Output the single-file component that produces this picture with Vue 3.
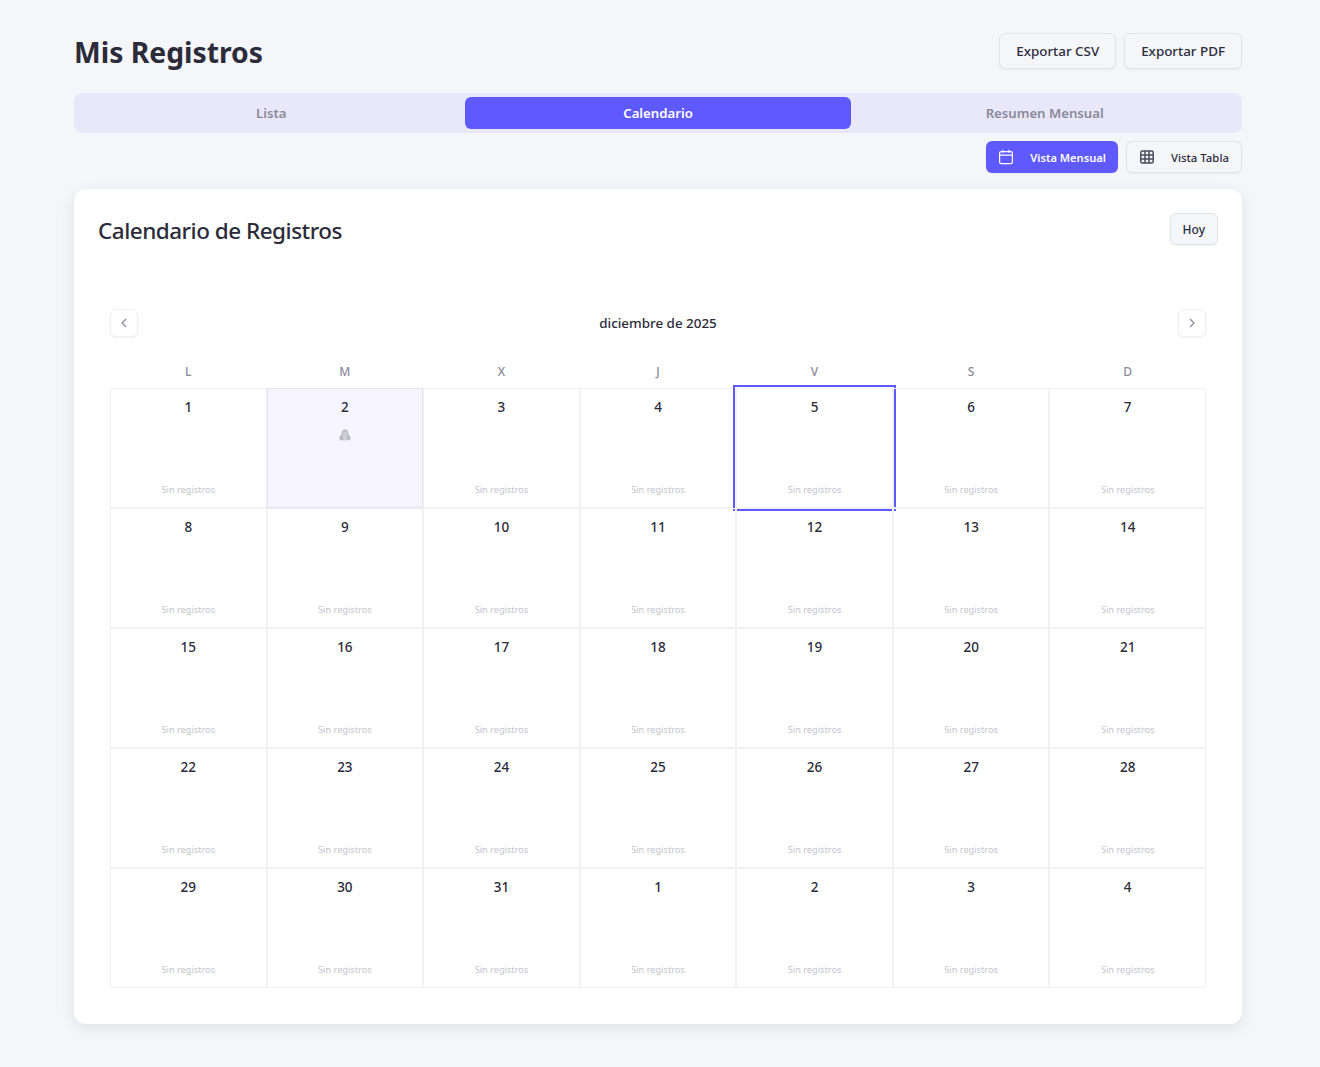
<template>
  <div class="page">
    <header class="top">
      <h1>Mis Registros</h1>
      <div class="exports">
        <button class="btn">Exportar CSV</button>
        <button class="btn">Exportar PDF</button>
      </div>
    </header>

    <div class="tabs">
      <button v-for="t in tabs" :key="t" class="tab" :class="{ active: t === 'Calendario' }">{{ t }}</button>
    </div>

    <div class="views">
      <button class="view active">
        <svg width="16" height="16" viewBox="0 0 16 16" fill="none" stroke="currentColor" stroke-width="1.2">
          <rect x="1.6" y="2.6" width="12.8" height="12" rx="1.6" />
          <path d="M1.6 6.2h12.8M5 .8v3M11 .8v3" />
        </svg>
        <span>Vista Mensual</span>
      </button>
      <button class="view">
        <svg class="table-icon" width="16" height="16" viewBox="0 0 16 16" fill="none" stroke="currentColor" stroke-width="1.5">
          <rect x="1.800" y="2" width="12.400" height="12" rx="1.600" />
          <path d="M1.800 6h12.400M1.800 10h12.400M6 2v12M10 2v12" />
        </svg>
        <span>Vista Tabla</span>
      </button>
    </div>

    <section class="card">
      <div class="card-head">
        <h2>Calendario de Registros</h2>
        <button class="today">Hoy</button>
      </div>

      <div class="calendar">
        <div class="month">
          <button class="arrow">
            <svg width="12" height="12" viewBox="0 0 12 12" fill="none" stroke="currentColor" stroke-width="1.3"><path d="M8 2 4 6l4 4" /></svg>
          </button>
          <span>diciembre de 2025</span>
          <button class="arrow">
            <svg width="12" height="12" viewBox="0 0 12 12" fill="none" stroke="currentColor" stroke-width="1.3"><path d="M4 2l4 4-4 4" /></svg>
          </button>
        </div>

        <div class="weekdays">
          <div v-for="(d, i) in weekdays" :key="i">{{ d }}</div>
        </div>

        <div class="grid">
          <div v-for="(c, i) in cells" :key="i" class="cell" :class="{ marked: c.marked, selected: c.selected }">
            <span class="num">{{ c.day }}</span>
            <svg v-if="c.marked" class="blob" width="12" height="12" viewBox="0 0 12 12">
              <path d="M.6 9.800V8.400C.6 7 1.400 6.200 2.500 6 2.600 2.800 3.500.6 6 .6S9.400 2.800 9.500 6c1.100.2 1.900 1 1.900 2.400v1.400c0 .9-.6 1.500-1.500 1.500H2.100C1.200 11.300.6 10.700.6 9.800z" fill="#b9b9c4" />
              <path d="M5 2.500v8.800M7 2.500v8.800" stroke="#f6f5ff" stroke-width=".7" />
            </svg>
            <span v-else class="none">Sin registros</span>
          </div>
        </div>
      </div>
    </section>
  </div>
</template>

<script setup>
const tabs = ['Lista', 'Calendario', 'Resumen Mensual']
const weekdays = ['L', 'M', 'X', 'J', 'V', 'S', 'D']

const days = []
for (let d = 1; d <= 31; d++) days.push(d)
for (let d = 1; d <= 4; d++) days.push(d)

const cells = days.map((day, i) => ({
  day,
  marked: i === 1,
  selected: i === 4,
}))
</script>

<style>
html, body {
  background: #f5f6fa;
}
</style>

<style scoped>
.page {
  box-sizing: border-box;
  width: 1168px;
  margin-left: 74px;
  padding: 33px 0 43px;
  font-family: "Noto Sans", sans-serif;
  color: #2b2b3a;
}
button {
  font-family: inherit;
  cursor: pointer;
}
.top {
  display: flex;
  justify-content: space-between;
  align-items: center;
  height: 36px;
  margin-bottom: 24px;
}
h1 {
  margin: 0;
  padding-top: 1px;
  font-size: 28.3px;
  font-weight: 700;
  color: #2b2b3a;
}
.exports {
  display: flex;
  gap: 8px;
}
.btn {
  height: 36px;
  padding: 0 16px 1px;
  font-size: 13.4px;
  font-weight: 500;
  color: #2b2b3a;
  background: #f5f6fa;
  border: 1px solid #e3e3ea;
  border-radius: 6px;
  box-shadow: 0 1px 2px rgba(0, 0, 0, 0.05);
}
.tabs {
  display: flex;
  padding: 4px;
  height: 40px;
  box-sizing: border-box;
  background: #e8e8fa;
  border-radius: 8px;
}
.tab {
  flex: 1;
  border: 0;
  padding: 0 0 1px;
  background: none;
  font-size: 13.2px;
  font-weight: 600;
  color: #8a8a9a;
  border-radius: 6px;
}
.tab.active {
  background: #5f5aff;
  color: #fff;
}
.views {
  display: flex;
  justify-content: flex-end;
  gap: 8px;
  margin-top: 8px;
}
.view {
  display: flex;
  align-items: center;
  gap: 16px;
  height: 32px;
  padding: 0 12px;
  font-size: 11.4px;
  font-weight: 500;
  color: #2b2b3a;
  background: #f5f6fa;
  border: 1px solid #e3e3ea;
  border-radius: 6px;
  box-shadow: 0 1px 2px rgba(0, 0, 0, 0.05);
}
.view.active {
  font-size: 11.1px;
  font-weight: 600;
  background: #5f5aff;
  border: 0;
  color: #fff;
}
.table-icon {
  color: #4b4b5a;
}
.card {
  margin-top: 16px;
  padding: 24px;
  background: #fff;
  border-radius: 12px;
  box-shadow: 0 4px 16px rgba(0, 0, 0, 0.09);
}
.card-head {
  display: flex;
  justify-content: space-between;
  align-items: flex-start;
  height: 32px;
}
h2 {
  margin: 0;
  font-size: 22.5px;
  line-height: 35px;
  font-weight: 500;
  letter-spacing: -0.5px;
}
.today {
  height: 32px;
  padding: 0 12px;
  font-size: 12px;
  font-weight: 500;
  color: #2b2b3a;
  background: #f5f6fa;
  border: 1px solid #e3e3ea;
  border-radius: 6px;
  box-shadow: 0 1px 2px rgba(0, 0, 0, 0.05);
}
.calendar {
  margin-top: 40px;
  padding: 24px 12px 12px;
}
.month {
  display: flex;
  justify-content: space-between;
  align-items: center;
  height: 28px;
  font-size: 13.4px;
  font-weight: 500;
}
.arrow {
  display: flex;
  align-items: center;
  justify-content: center;
  width: 28px;
  height: 28px;
  padding: 0;
  color: #8a8a9a;
  background: #fff;
  border: 1px solid #eeeef3;
  border-radius: 6px;
  box-shadow: 0 1px 2px rgba(0, 0, 0, 0.05);
}
.weekdays {
  display: grid;
  grid-template-columns: repeat(7, 1fr);
  margin-top: 16px;
  height: 35px;
  line-height: 37px;
  text-align: center;
  font-size: 12px;
  font-weight: 500;
  color: #8a8a9a;
}
.grid {
  display: grid;
  grid-template-columns: repeat(7, 1fr);
  grid-auto-rows: 120px;
}
.cell {
  box-sizing: border-box;
  display: flex;
  flex-direction: column;
  align-items: center;
  padding-top: 8px;
  border: 1px solid #f0f0f5;
  position: relative;
}
.num {
  font-size: 13.5px;
  line-height: 20px;
  font-weight: 500;
}
.none {
  position: absolute;
  left: 0;
  right: 0;
  bottom: 10px;
  text-align: center;
  font-size: 9.2px;
  line-height: 14px;
  color: #c4c4ce;
}
.blob {
  margin-top: 12px;
}
.marked {
  background: #f6f5ff;
  border-color: #e3e3ee;
}
.selected {
  outline: 2px solid #5f5aff;
  outline-offset: 1px;
}
</style>
